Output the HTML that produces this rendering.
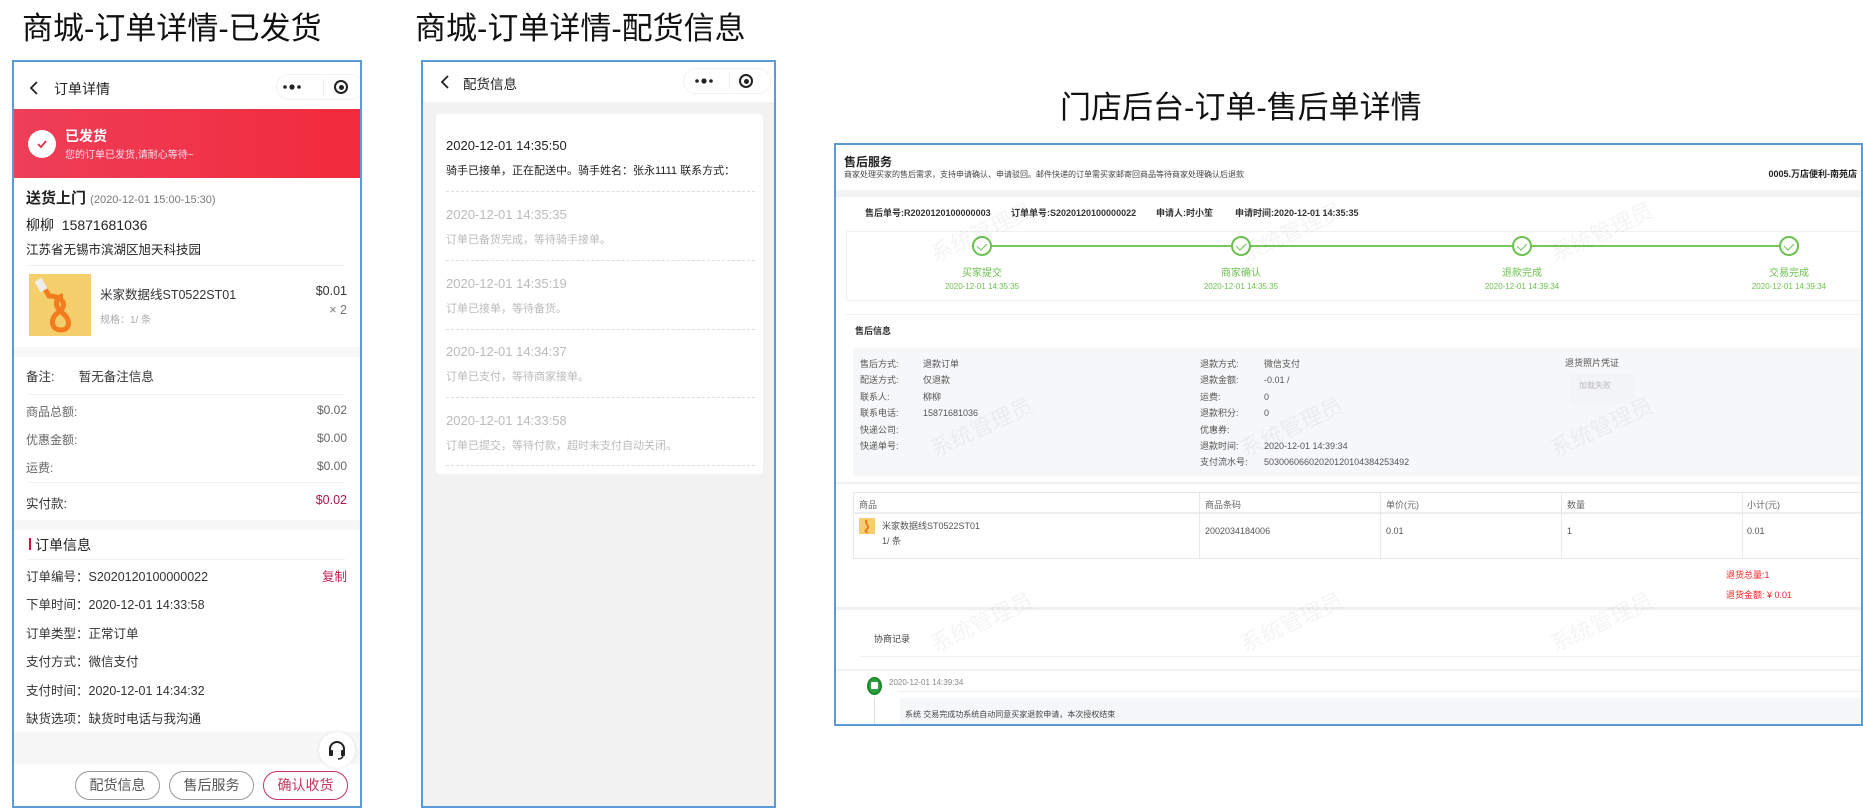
<!DOCTYPE html>
<html><head><meta charset="utf-8">
<style>
*{margin:0;padding:0;box-sizing:border-box}
body{width:1863px;height:809px;background:#fff;position:relative;overflow:hidden;font-family:"Liberation Sans","Noto Sans CJK SC",sans-serif;color:#333}
.a{position:absolute;white-space:nowrap}
.big{font-size:31px;color:#111;line-height:36px}
.phone{position:absolute;border:2px solid #5b9bd5;background:#fff;overflow:hidden}
.gray{color:#999}
.dash{position:absolute;left:18px;right:18px;border-top:1px dashed #ddd}
.hl{position:absolute;height:1px;background:#eee}
.btn{position:absolute;top:709px;height:29px;width:85px;border:1px solid #999;border-radius:15px;font-size:14px;text-align:center;line-height:27px;color:#555}
.wm{position:absolute;color:rgba(0,0,0,0.045);font-size:22px;transform:rotate(-25deg);white-space:nowrap}
.s{font-size:9px;color:#444}
.step{position:absolute;top:238px;width:20px;height:20px;border:2px solid #6cc14f;border-radius:50%;background:#fff}
.step:after{content:"";position:absolute;left:5px;top:3px;width:5px;height:8px;border:solid #6cc14f;border-width:0 1.5px 1.5px 0;transform:rotate(45deg)}
.sl{position:absolute;font-size:10px;color:#6cc14f;text-align:center;width:160px}
.sd{position:absolute;font-size:8px;color:#6cc14f;text-align:center;width:160px}
</style></head><body>

<div class="a big" style="left:22px;top:11px">商城-订单详情-已发货</div>
<div class="a big" style="left:415px;top:11px">商城-订单详情-配货信息</div>
<div class="a big" style="left:1060px;top:90px">门店后台-订单-售后单详情</div>

<!-- Phone 1 -->
<div class="phone" style="left:12px;top:60px;width:350px;height:748px">
  <svg class="a" style="left:14px;top:18px" width="12" height="16"><path d="M9 2 L3 8 L9 14" fill="none" stroke="#222" stroke-width="1.8"/></svg>
  <div class="a" style="left:40px;top:17px;font-size:14px;color:#222">订单详情</div>
  <div class="a" style="left:262px;top:12px;width:88px;height:26px;border:1px solid #f2f2f2;border-radius:13px"></div>
  <svg class="a" style="left:266px;top:18px" width="24" height="14"><circle cx="5" cy="7" r="1.8" fill="#222"/><circle cx="12" cy="7" r="2.6" fill="#222"/><circle cx="19" cy="7" r="1.8" fill="#222"/></svg>
  <div class="a" style="left:309px;top:17px;width:1px;height:16px;background:#eee"></div>
  <div class="a" style="left:320px;top:18px;width:14px;height:14px;border:2px solid #222;border-radius:50%"></div>
  <div class="a" style="left:324.5px;top:22.5px;width:5px;height:5px;background:#222;border-radius:50%"></div>
  <div class="a" style="left:0;top:47px;width:350px;height:69px;background:linear-gradient(90deg,#ee3e58,#f22a3c)"></div>
  <div class="a" style="left:14px;top:68px;width:28px;height:28px;background:#fff;border-radius:50%"></div>
  <svg class="a" style="left:20px;top:74px" width="16" height="16"><path d="M4 8 L7 11 L12 5" fill="none" stroke="#e8304a" stroke-width="1.8"/></svg>
  <div class="a" style="left:51px;top:64px;font-size:14px;font-weight:bold;color:#fff">已发货</div>
  <div class="a" style="left:51px;top:84px;font-size:10px;color:#fde">您的订单已发货,请耐心等待~</div>
  <div class="a" style="left:12px;top:125px;font-size:15px;font-weight:bold;color:#222">送货上门 <span style="font-size:11px;color:#777;font-weight:normal">(2020-12-01 15:00-15:30)</span></div>
  <div class="a" style="left:12px;top:153px;font-size:14px;color:#222">柳柳&nbsp;&nbsp;15871681036</div>
  <div class="a" style="left:12px;top:177px;font-size:12.5px;color:#222">江苏省无锡市滨湖区旭天科技园</div>
  <div class="hl" style="left:15px;right:15px;top:203px"></div>
  <div class="a" style="left:15px;top:212px;width:62px;height:62px;background:#f6cf6d">
    <svg width="62" height="62"><path d="M12 8 L20 22 C32 22 40 30 30 38 C20 44 22 56 32 56 C42 56 42 44 32 38 C24 30 28 22 34 22" fill="none" stroke="#f27c1e" stroke-width="5"/><rect x="8" y="5" width="8" height="12" fill="#eee" transform="rotate(-30 12 11)"/></svg>
  </div>
  <div class="a" style="left:86px;top:222px;font-size:12.5px;color:#333">米家数据线ST0522ST01</div>
  <div class="a" style="left:86px;top:249px;font-size:10px;color:#aaa">规格：1/ 条</div>
  <div class="a" style="right:13px;top:222px;font-size:12.5px;color:#333">$0.01</div>
  <div class="a" style="right:13px;top:241px;font-size:12.5px;color:#777">× 2</div>
  <div class="a" style="left:0;top:285px;width:350px;height:10px;background:#f7f7f7"></div>
  <div class="a" style="left:12px;top:304px;font-size:12.5px">备注:&nbsp;&nbsp;&nbsp;&nbsp;&nbsp;&nbsp;&nbsp;暂无备注信息</div>
  <div class="hl" style="left:15px;right:15px;top:332px"></div>
  <div class="a" style="left:12px;top:341px;font-size:12px;color:#666">商品总额:</div><div class="a" style="right:13px;top:341px;font-size:12px;color:#666">$0.02</div>
  <div class="a" style="left:12px;top:369px;font-size:12px;color:#666">优惠金额:</div><div class="a" style="right:13px;top:369px;font-size:12px;color:#666">$0.00</div>
  <div class="a" style="left:12px;top:397px;font-size:12px;color:#666">运费:</div><div class="a" style="right:13px;top:397px;font-size:12px;color:#666">$0.00</div>
  <div class="hl" style="left:15px;right:15px;top:420px"></div>
  <div class="a" style="left:12px;top:431px;font-size:12.5px">实付款:</div><div class="a" style="right:13px;top:431px;font-size:12.5px;color:#b0164a">$0.02</div>
  <div class="a" style="left:0;top:458px;width:350px;height:10px;background:#f7f7f7"></div>
  <div class="a" style="left:15px;top:476px;width:2px;height:12px;background:#d0103a"></div>
  <div class="a" style="left:21px;top:473px;font-size:14px;color:#222">订单信息</div>
  <div class="hl" style="left:15px;right:15px;top:497px"></div>
  <div class="a" style="left:12px;top:504px;font-size:12.5px">订单编号：S2020120100000022</div><div class="a" style="right:13px;top:504px;font-size:12.5px;color:#c02050">复制</div>
  <div class="a" style="left:12px;top:532px;font-size:12.5px">下单时间：2020-12-01 14:33:58</div>
  <div class="a" style="left:12px;top:561px;font-size:12.5px">订单类型：正常订单</div>
  <div class="a" style="left:12px;top:589px;font-size:12.5px">支付方式：微信支付</div>
  <div class="a" style="left:12px;top:618px;font-size:12.5px">支付时间：2020-12-01 14:34:32</div>
  <div class="a" style="left:12px;top:646px;font-size:12.5px">缺货选项：缺货时电话与我沟通</div>
  <div class="a" style="left:0;top:670px;width:350px;height:32px;background:#f7f7f7"></div>
  <div class="a" style="left:305px;top:670px;width:36px;height:36px;background:#fff;border-radius:50%;box-shadow:0 0 3px #ddd"></div>
  <svg class="a" style="left:312px;top:677px" width="22" height="22"><path d="M4 13 V10 A7 7 0 0 1 18 10 V13" fill="none" stroke="#222" stroke-width="2"/><rect x="3" y="11" width="4" height="6" rx="1" fill="#222"/><rect x="15" y="11" width="4" height="6" rx="1" fill="#222"/><path d="M17 17 Q16 20 12 20" fill="none" stroke="#222" stroke-width="1.5"/></svg>
  <div class="btn" style="left:61px">配货信息</div>
  <div class="btn" style="left:155px">售后服务</div>
  <div class="btn" style="left:249px;border-color:#c4365e;color:#c4365e">确认收货</div>
</div>

<!-- Phone 2 -->
<div class="phone" style="left:421px;top:60px;width:355px;height:748px;background:#f2f2f2">
  <div class="a" style="left:0;top:0;width:355px;height:40px;background:#fff"></div>
  <svg class="a" style="left:16px;top:12px" width="12" height="16"><path d="M9 2 L3 8 L9 14" fill="none" stroke="#222" stroke-width="1.8"/></svg>
  <div class="a" style="left:40px;top:11px;font-size:13.5px;color:#222">配货信息</div>
  <div class="a" style="left:260px;top:6px;width:88px;height:26px;border:1px solid #f2f2f2;border-radius:13px;background:#fff"></div>
  <svg class="a" style="left:269px;top:12px" width="24" height="14"><circle cx="5" cy="7" r="1.8" fill="#222"/><circle cx="12" cy="7" r="2.6" fill="#222"/><circle cx="19" cy="7" r="1.8" fill="#222"/></svg>
  <div class="a" style="left:306px;top:11px;width:1px;height:16px;background:#eee"></div>
  <div class="a" style="left:316px;top:12px;width:14px;height:14px;border:2px solid #222;border-radius:50%"></div>
  <div class="a" style="left:320.5px;top:16.5px;width:5px;height:5px;background:#222;border-radius:50%"></div>
  <div class="a" style="left:13px;top:52px;width:327px;height:360px;background:#fff;border-radius:4px">
    <div class="a" style="left:10px;top:24px;font-size:13px;color:#222">2020-12-01 14:35:50</div>
    <div class="a" style="left:10px;top:48px;font-size:11px;color:#222">骑手已接单，正在配送中。骑手姓名：张永1111 联系方式：</div>
    <div class="dash" style="left:10px;right:8px;top:77px"></div>
    <div class="a" style="left:10px;top:93px;font-size:13px;color:#bbb">2020-12-01 14:35:35</div>
    <div class="a" style="left:10px;top:117px;font-size:11px;color:#bbb">订单已备货完成，等待骑手接单。</div>
    <div class="dash" style="left:10px;right:8px;top:146px"></div>
    <div class="a" style="left:10px;top:162px;font-size:13px;color:#bbb">2020-12-01 14:35:19</div>
    <div class="a" style="left:10px;top:186px;font-size:11px;color:#bbb">订单已接单，等待备货。</div>
    <div class="dash" style="left:10px;right:8px;top:215px"></div>
    <div class="a" style="left:10px;top:230px;font-size:13px;color:#bbb">2020-12-01 14:34:37</div>
    <div class="a" style="left:10px;top:254px;font-size:11px;color:#bbb">订单已支付，等待商家接单。</div>
    <div class="dash" style="left:10px;right:8px;top:283px"></div>
    <div class="a" style="left:10px;top:299px;font-size:13px;color:#bbb">2020-12-01 14:33:58</div>
    <div class="a" style="left:10px;top:323px;font-size:11px;color:#bbb">订单已提交，等待付款，超时未支付自动关闭。</div>
    <div class="dash" style="left:10px;right:8px;top:351px"></div>
  </div>
</div>

<!-- Backend panel -->
<div class="phone" style="left:834px;top:143px;width:1029px;height:583px">
  <div class="a" style="left:8px;top:8px;font-size:12px;font-weight:bold;color:#222">售后服务</div>
  <div class="a" style="left:8px;top:24px;font-size:8px;color:#444">商家处理买家的售后需求，支持申请确认、申请驳回。邮件快递的订单需买家邮寄回商品等待商家处理确认后退款</div>
  <div class="a" style="right:4px;top:22px;font-size:9px;font-weight:bold;color:#222">0005.万店便利-南苑店</div>
  <div class="a" style="left:0;top:45px;width:1029px;height:7px;background:#f2f3f5"></div>
  <div class="a s" style="left:29px;top:61px;font-weight:bold;color:#333">售后单号:R2020120100000003</div>
  <div class="a s" style="left:175px;top:61px;font-weight:bold;color:#333">订单单号:S2020120100000022</div>
  <div class="a s" style="left:320px;top:61px;font-weight:bold;color:#333">申请人:时小笙</div>
  <div class="a s" style="left:399px;top:61px;font-weight:bold;color:#333">申请时间:2020-12-01 14:35:35</div>
  <div class="a" style="left:10px;top:86px;width:1019px;height:70px;border:1px solid #f0f0f0"></div>
  <div class="a" style="left:146px;top:100px;width:806px;height:2px;background:#78c75a"></div>
  <div class="step" style="left:136px;top:91px"></div>
  <div class="step" style="left:395px;top:91px"></div>
  <div class="step" style="left:676px;top:91px"></div>
  <div class="step" style="left:943px;top:91px"></div>
  <div class="sl" style="left:66px;top:119px">买家提交</div><div class="sd" style="left:66px;top:137px">2020-12-01 14:35:35</div>
  <div class="sl" style="left:325px;top:119px">商家确认</div><div class="sd" style="left:325px;top:137px">2020-12-01 14:35:35</div>
  <div class="sl" style="left:606px;top:119px">退款完成</div><div class="sd" style="left:606px;top:137px">2020-12-01 14:39:34</div>
  <div class="sl" style="left:873px;top:119px">交易完成</div><div class="sd" style="left:873px;top:137px">2020-12-01 14:39:34</div>
  <div class="a" style="left:10px;top:169px;width:1019px;height:1px;background:#f0f0f0"></div>
  <div class="a s" style="left:19px;top:179px;font-weight:bold;color:#333">售后信息</div>
  <div class="a" style="left:17px;top:203px;width:1012px;height:128px;background:#f6f7f9"></div>
  <div class="a s" style="left:24px;top:211px;line-height:16.4px;color:#555">售后方式:<br>配送方式:<br>联系人:<br>联系电话:<br>快递公司:<br>快递单号:</div>
  <div class="a s" style="left:87px;top:211px;line-height:16.4px;color:#555">退款订单<br>仅退款<br>柳柳<br>15871681036</div>
  <div class="a s" style="left:364px;top:211px;line-height:16.4px;color:#555">退款方式:<br>退款金额:<br>运费:<br>退款积分:<br>优惠券:<br>退款时间:<br>支付流水号:</div>
  <div class="a s" style="left:428px;top:211px;line-height:16.4px;color:#555">微信支付<br>-0.01 /<br>0<br>0<br><br>2020-12-01 14:39:34<br>50300606602020120104384253492</div>
  <div class="a s" style="left:729px;top:211px;color:#555">退货照片凭证</div>
  <div class="a" style="left:734px;top:229px;width:64px;height:30px;background:#f3f4f6"></div>
  <div class="a" style="left:743px;top:235px;font-size:8px;color:#bbb">加载失败</div>
  <div class="a" style="left:0;top:337px;width:1029px;height:2px;background:#f0f1f4"></div>
  <div class="a" style="left:17px;top:347px;width:1012px;height:67px;border:1px solid #e8e8e8;border-right:none"></div>
  <div class="a" style="left:17px;top:367px;width:1012px;height:2px;background:#eee"></div>
  <div class="a" style="left:363px;top:347px;width:1px;height:67px;background:#e8e8e8"></div>
  <div class="a" style="left:544px;top:347px;width:1px;height:67px;background:#e8e8e8"></div>
  <div class="a" style="left:725px;top:347px;width:1px;height:67px;background:#e8e8e8"></div>
  <div class="a" style="left:906px;top:347px;width:1px;height:67px;background:#e8e8e8"></div>
  <div class="a s" style="left:23px;top:353px;color:#666">商品</div>
  <div class="a s" style="left:369px;top:353px;color:#666">商品条码</div>
  <div class="a s" style="left:550px;top:353px;color:#666">单价(元)</div>
  <div class="a s" style="left:731px;top:353px;color:#666">数量</div>
  <div class="a s" style="left:911px;top:353px;color:#666">小计(元)</div>
  <div class="a" style="left:23px;top:373px;width:16px;height:16px;background:#f6cf6d"><svg width="16" height="16"><path d="M8 2 C4 5 12 8 8 11 C5 13 7 15 9 14" fill="none" stroke="#f27c1e" stroke-width="2"/></svg></div>
  <div class="a s" style="left:46px;top:374px;color:#555">米家数据线ST0522ST01</div>
  <div class="a s" style="left:46px;top:389px;color:#555">1/ 条</div>
  <div class="a s" style="left:369px;top:381px;color:#555">2002034184006</div>
  <div class="a s" style="left:550px;top:381px;color:#555">0.01</div>
  <div class="a s" style="left:731px;top:381px;color:#555">1</div>
  <div class="a s" style="left:911px;top:381px;color:#555">0.01</div>
  <div class="a s" style="left:890px;top:423px;color:#f22">退货总量:1</div>
  <div class="a s" style="left:890px;top:443px;color:#f22">退货金额: ¥ 0.01</div>
  <div class="a" style="left:0;top:462px;width:1029px;height:3px;background:#f0f1f4"></div>
  <div class="a s" style="left:38px;top:487px;color:#444">协商记录</div>
  <div class="a" style="left:25px;top:511px;width:1004px;height:1px;background:#eee"></div>
  <div class="a" style="left:0;top:524px;width:1029px;height:2px;background:#f0f1f4"></div>
  <div class="a" style="left:38px;top:552px;width:1px;height:31px;background:#ddd"></div>
  <div class="a" style="left:31px;top:532px;width:15px;height:18px;border-radius:50%;border:2px solid #1a8a2a;background:#2ea043"></div>
  <div class="a" style="left:35px;top:537px;width:7px;height:7px;background:#fff;border-radius:1px"></div>
  <div class="a" style="left:53px;top:533px;font-size:8px;color:#888">2020-12-01 14:39:34</div>
  <div class="a" style="left:62px;top:546px;width:967px;height:1px;background:#eee"></div>
  <div class="a" style="left:64px;top:553px;width:965px;height:30px;background:#f6f7f9"></div>
  <div class="a" style="left:69px;top:564px;font-size:8px;color:#444">系统 交易完成功系统自动同意买家退款申请，本次授权结束</div>
  <div class="wm" style="left:90px;top:70px">系统管理员</div>
  <div class="wm" style="left:400px;top:70px">系统管理员</div>
  <div class="wm" style="left:710px;top:70px">系统管理员</div>
  <div class="wm" style="left:90px;top:265px">系统管理员</div>
  <div class="wm" style="left:400px;top:265px">系统管理员</div>
  <div class="wm" style="left:710px;top:265px">系统管理员</div>
  <div class="wm" style="left:90px;top:460px">系统管理员</div>
  <div class="wm" style="left:400px;top:460px">系统管理员</div>
  <div class="wm" style="left:710px;top:460px">系统管理员</div>
</div>
</body></html>
